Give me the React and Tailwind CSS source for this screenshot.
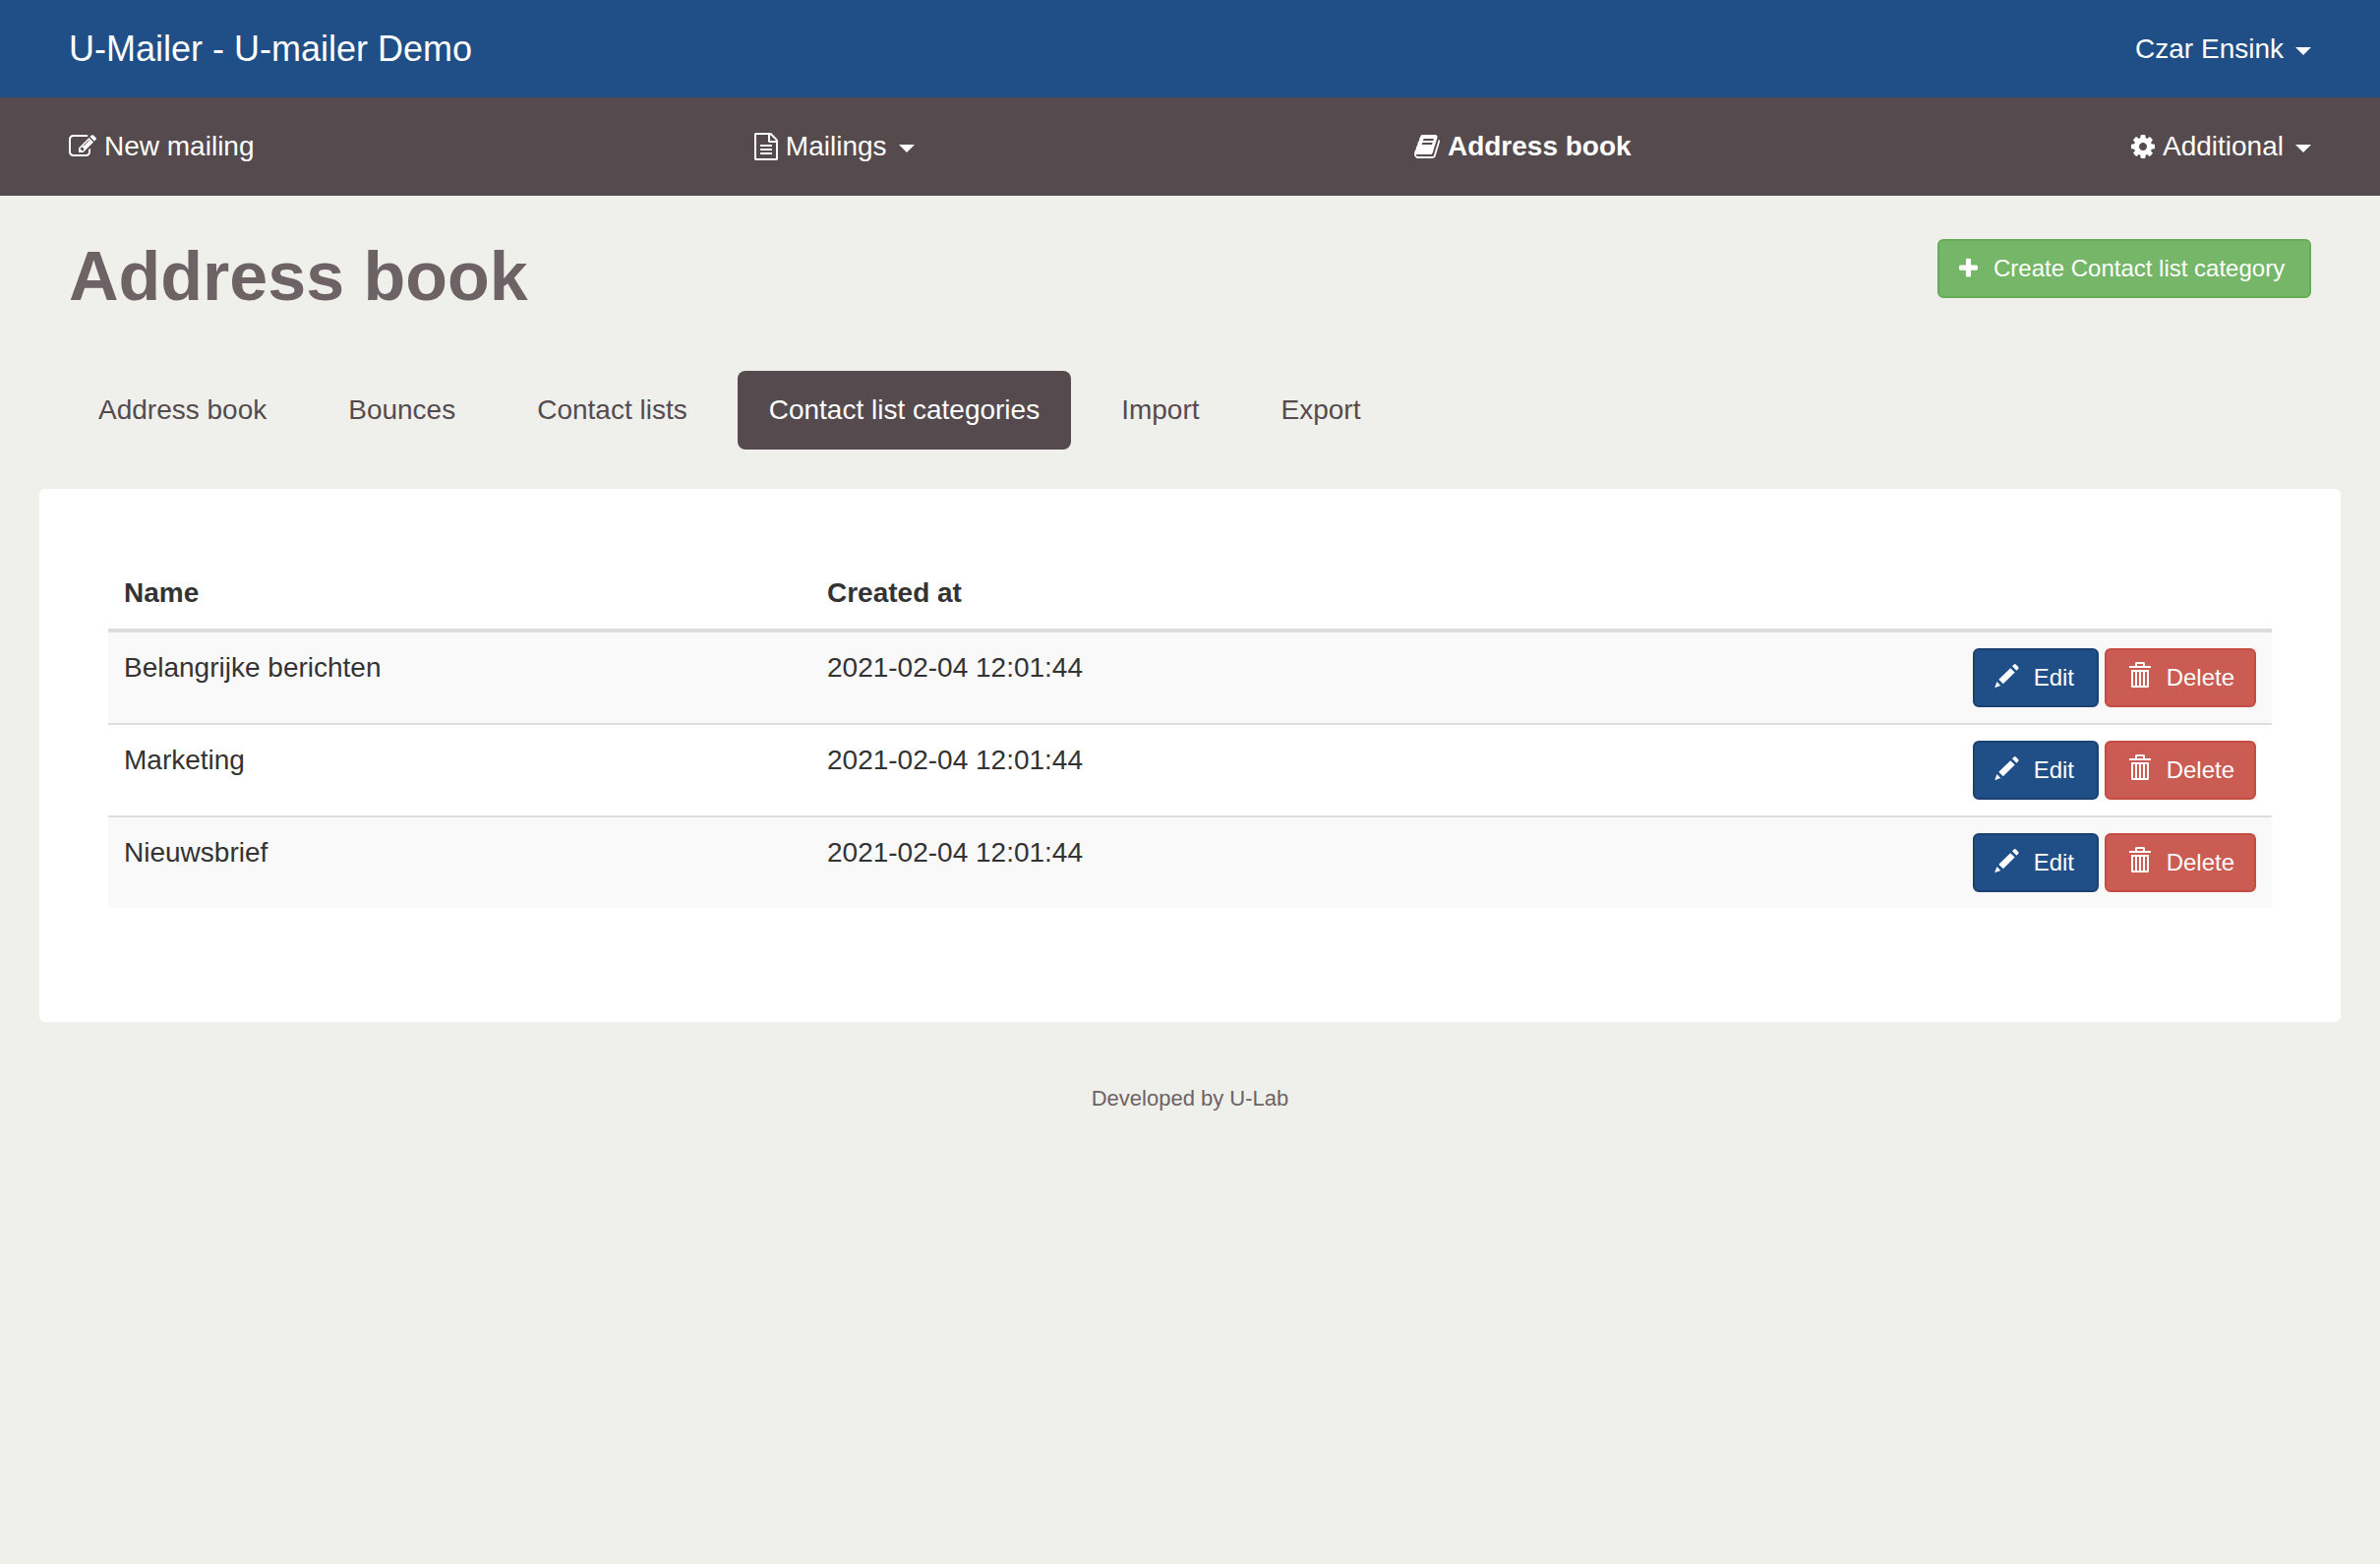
import React from "react";

const rows = [
  { name: "Belangrijke berichten", createdAt: "2021-02-04 12:01:44" },
  { name: "Marketing", createdAt: "2021-02-04 12:01:44" },
  { name: "Nieuwsbrief", createdAt: "2021-02-04 12:01:44" },
];

const tabs = [
  { label: "Address book" },
  { label: "Bounces" },
  { label: "Contact lists" },
  { label: "Contact list categories", active: true },
  { label: "Import" },
  { label: "Export" },
];

function ComposeIcon() {
  return (
    <svg aria-hidden="true" viewBox="0 0 1792 1792" className="h-7 w-7 fill-current">
      <path d="M888 1184l116-116-152-152-116 116v56h96v96h56zm440-720q-16-16-33 1l-350 350q-17 17-1 33t33-1l350-350q17-17 1-33zm80 594v190q0 119-84.5 203.5t-203.5 84.5h-832q-119 0-203.5-84.5t-84.5-203.5v-832q0-119 84.5-203.5t203.5-84.5h832q63 0 117 25 15 7 18 23 3 17-9 29l-49 49q-14 14-32 8-23-6-45-6h-832q-66 0-113 47t-47 113v832q0 66 47 113t113 47h832q66 0 113-47t47-113v-126q0-13 9-22l64-64q15-15 35-7t20 29zm-96-738l288 288-672 672h-288v-288zm444 132l-92 92-288-288 92-92q28-28 68-28t68 28l152 152q28 28 28 68t-28 68z" />
    </svg>
  );
}

function FileIcon() {
  return (
    <svg aria-hidden="true" viewBox="128 0 1536 1792" className="h-7 w-6 fill-current">
      <path d="M1596 380q28 28 48 76t20 88v1152q0 40-28 68t-68 28h-1344q-40 0-68-28t-28-68v-1600q0-40 28-68t68-28h896q40 0 88 20t76 48zm-444-244v376h376q-10-29-22-41l-313-313q-12-12-41-22zm384 1528v-1024h-416q-40 0-68-28t-28-68v-416h-768v1536h1280zm-1024-864q0-14 9-23t23-9h704q14 0 23 9t9 23v64q0 14-9 23t-23 9h-704q-14 0-23-9t-9-23v-64zm736 224q14 0 23 9t9 23v64q0 14-9 23t-23 9h-704q-14 0-23-9t-9-23v-64q0-14 9-23t23-9h704zm0 256q14 0 23 9t9 23v64q0 14-9 23t-23 9h-704q-14 0-23-9t-9-23v-64q0-14 9-23t23-9h704z" />
    </svg>
  );
}

function BookIcon() {
  return (
    <svg aria-hidden="true" viewBox="64 0 1664 1792" className="h-7 w-[26px] fill-current">
      <path d="M1703 478q40 57 18 129l-275 906q-19 64-76.5 107.5t-122.5 43.5h-923q-77 0-148.5-53.5t-99.5-131.5q-24-67-2-127 0-4 3-27t4-37q1-8-3-21.5t-3-19.5q2-11 8-21t16.5-23.5 16.5-23.5q23-38 45-91.5t30-91.5q3-10 .5-30t-.5-28q3-11 17-28t17-23q21-36 42-92t25-90q1-9-2.5-32t.5-28q4-13 22-30.5t22-22.5q19-26 42.5-84.5t27.5-96.5q1-8-3-25.5t-2-26.5q2-8 9-18t18-23 17-21q8-12 16.5-30.5t15-35 16-36 19.5-32 26.5-23.5 36-11.5 47.5 5.5l-1 3q38-9 51-9h761q74 0 114 56t18 130l-274 906q-36 119-71.5 153.5t-128.5 34.5h-869q-27 0-38 15-11 16-1 43 24 70 144 70h923q29 0 56-15.5t35-41.5l300-987q7-22 5-57 38 15 59 43zm-1064 2q-4 13 2 22.5t20 9.5h608q13 0 25.5-9.5t16.5-22.5l21-64q4-13-2-22.5t-20-9.5h-608q-13 0-25.5 9.5t-16.5 22.5zm-83 256q-4 13 2 22.5t20 9.5h608q13 0 25.5-9.5t16.5-22.5l21-64q4-13-2-22.5t-20-9.5h-608q-13 0-25.5 9.5t-16.5 22.5z" />
    </svg>
  );
}

function CogIcon() {
  return (
    <svg aria-hidden="true" viewBox="128 0 1536 1792" className="h-7 w-6 fill-current">
      <path d="M1152 896q0-106-75-181t-181-75-181 75-75 181 75 181 181 75 181-75 75-181zm512-109v222q0 12-8 23t-20 13l-185 28q-19 54-39 91 35 50 107 138 10 12 10 25t-9 23q-27 37-99 108t-94 71q-12 0-26-9l-138-108q-44 23-91 38-16 136-29 186-7 28-36 28h-222q-14 0-24.5-8.5t-11.5-21.5l-28-184q-49-16-90-37l-141 107q-10 9-25 9-14 0-25-11-126-114-165-168-7-10-7-23 0-12 8-23 15-21 51-66.5t54-70.5q-27-50-41-99l-183-27q-13-2-21-12.5t-8-23.5v-222q0-12 8-23t19-13l186-28q14-46 39-92-40-57-107-138-10-12-10-24 0-10 9-23 26-36 98.5-107.5t94.5-71.5q13 0 26 10l138 107q44-23 91-38 16-136 29-186 7-28 36-28h222q14 0 24.5 8.5t11.5 21.5l28 184q49 16 90 37l142-107q9-9 24-9 13 0 25 10 129 119 165 170 7 8 7 22 0 12-8 23-15 21-51 66.5t-54 70.5q26 50 41 98l183 28q13 2 21 12.5t8 23.5z" />
    </svg>
  );
}

function PlusIcon() {
  return (
    <svg aria-hidden="true" viewBox="192 0 1408 1792" className="h-6 w-[19px] fill-current">
      <path d="M1600 736v192q0 40-28 68t-68 28h-416v416q0 40-28 68t-68 28h-192q-40 0-68-28t-28-68v-416h-416q-40 0-68-28t-28-68v-192q0-40 28-68t68-28h416v-416q0-40 28-68t68-28h192q40 0 68 28t28 68v416h416q40 0 68 28t28 68z" />
    </svg>
  );
}

function PencilIcon() {
  return (
    <svg aria-hidden="true" viewBox="0 0 24 32" className="h-8 w-6 overflow-visible fill-current">
      <path d="M0.2 26.2L2.6 19.7Q3 21.3 4.4 21.8Q4.8 23.4 6.5 23.9z" />
      <path d="M4.3 17.8L16.2 6.2L20.7 10.4L8.8 22.2z" />
      <path d="M18 4.3L19.8 2.4Q20.8 1.6 21.8 2.5L24.2 5Q25 6 24.2 6.9L22.4 8.7z" />
    </svg>
  );
}

function TrashIcon() {
  return (
    <svg aria-hidden="true" viewBox="0 0 25 32" className="h-8 w-[25px] fill-current">
      <path d="M3 4H9V1.5Q9 0 10.5 0H17.5Q19 0 19 1.5V4H25V6H3zM11 4H17V2H11z" fillRule="evenodd" />
      <path
        d="M5 8H23V24.5Q23 26 21.5 26H6.5Q5 26 5 24.5zM7 10V24H9V10zM11 10V24H13V10zM15 10V24H17V10zM19 10V24H21V10z"
        fillRule="evenodd"
      />
    </svg>
  );
}

function Caret() {
  return (
    <svg aria-hidden="true" viewBox="0 0 16 8" className="ml-1 mt-1 h-2 w-4 fill-current">
      <path d="M0 0H16L8 8z" />
    </svg>
  );
}

export default function App() {
  return (
    <div className="min-h-screen bg-[#eff0eb] font-['Liberation_Sans',Arial,sans-serif] text-[28px] leading-10 text-[#333333]">
      <header className="text-white">
        <div className="flex h-[99px] items-center justify-between bg-[#1f4f86] px-[70px]">
          <a href="#" className="text-4xl leading-10">U-Mailer - U-mailer Demo</a>
          <button type="button" className="flex items-center gap-2">
            Czar Ensink
            <Caret />
          </button>
        </div>
        <nav className="flex h-[100px] items-center justify-between bg-[#554b4e] px-[70px]">
          <a href="#" className="flex items-center gap-2">
            <ComposeIcon />
            New mailing
          </a>
          <button type="button" className="flex items-center gap-2">
            <FileIcon />
            Mailings
            <Caret />
          </button>
          <a href="#" aria-current="page" className="flex items-center gap-2 font-bold">
            <BookIcon />
            Address book
          </a>
          <button type="button" className="flex items-center gap-2">
            <CogIcon />
            Additional
            <Caret />
          </button>
        </nav>
      </header>

      <main>
        <div className="flex items-start justify-between px-[70px] pt-11">
          <h1 className="text-[70px] leading-[76px] font-bold text-[#6d6265]">Address book</h1>
          <button
            type="button"
            className="flex h-[60px] min-w-[380px] items-center gap-4 rounded-md border-2 border-[#67ab58] bg-[#75b668] px-5 text-2xl text-white"
          >
            <PlusIcon />
            Create Contact list category
          </button>
        </div>

        <nav className="mt-[58px] flex gap-[19px] px-[68px]">
          {tabs.map((tab) => (
            <a
              key={tab.label}
              href="#"
              aria-current={tab.active ? "page" : undefined}
              className={
                tab.active
                  ? "rounded-lg bg-[#554b4e] px-8 py-5 text-white"
                  : "rounded-lg px-8 py-5 text-[#554b4e]"
              }
            >
              {tab.label}
            </a>
          ))}
        </nav>

        <section className="mx-10 mt-10 rounded-md bg-white px-[70px] pt-[70px] pb-[116px]">
          <table className="w-full table-fixed border-collapse text-left">
            <thead>
              <tr className="border-b-4 border-[#dddddd]">
                <th scope="col" className="w-[32.5%] p-4 font-bold">Name</th>
                <th scope="col" className="p-4 font-bold">Created at</th>
                <td className="p-4"></td>
              </tr>
            </thead>
            <tbody>
              {rows.map((row) => (
                <tr
                  key={row.name}
                  className="border-t-2 border-[#dddddd] align-top odd:bg-[#f9f9f9]"
                >
                  <td className="p-4">{row.name}</td>
                  <td className="p-4">{row.createdAt}</td>
                  <td className="p-4">
                    <div className="flex justify-end gap-[6px] text-2xl text-white">
                      <button
                        type="button"
                        className="flex h-[60px] min-w-32 items-center gap-4 rounded-md border-2 border-[#1a4170] bg-[#1f4f86] px-5"
                      >
                        <PencilIcon />
                        Edit
                      </button>
                      <button
                        type="button"
                        className="flex h-[60px] items-center gap-4 rounded-md border-2 border-[#c64b41] bg-[#ca5c54] px-5"
                      >
                        <TrashIcon />
                        Delete
                      </button>
                    </div>
                  </td>
                </tr>
              ))}
            </tbody>
          </table>
        </section>
      </main>

      <footer className="pt-[62px] pb-10 text-center text-[22px] leading-8 text-[#6d6265]">
        Developed by U-Lab
      </footer>
    </div>
  );
}
